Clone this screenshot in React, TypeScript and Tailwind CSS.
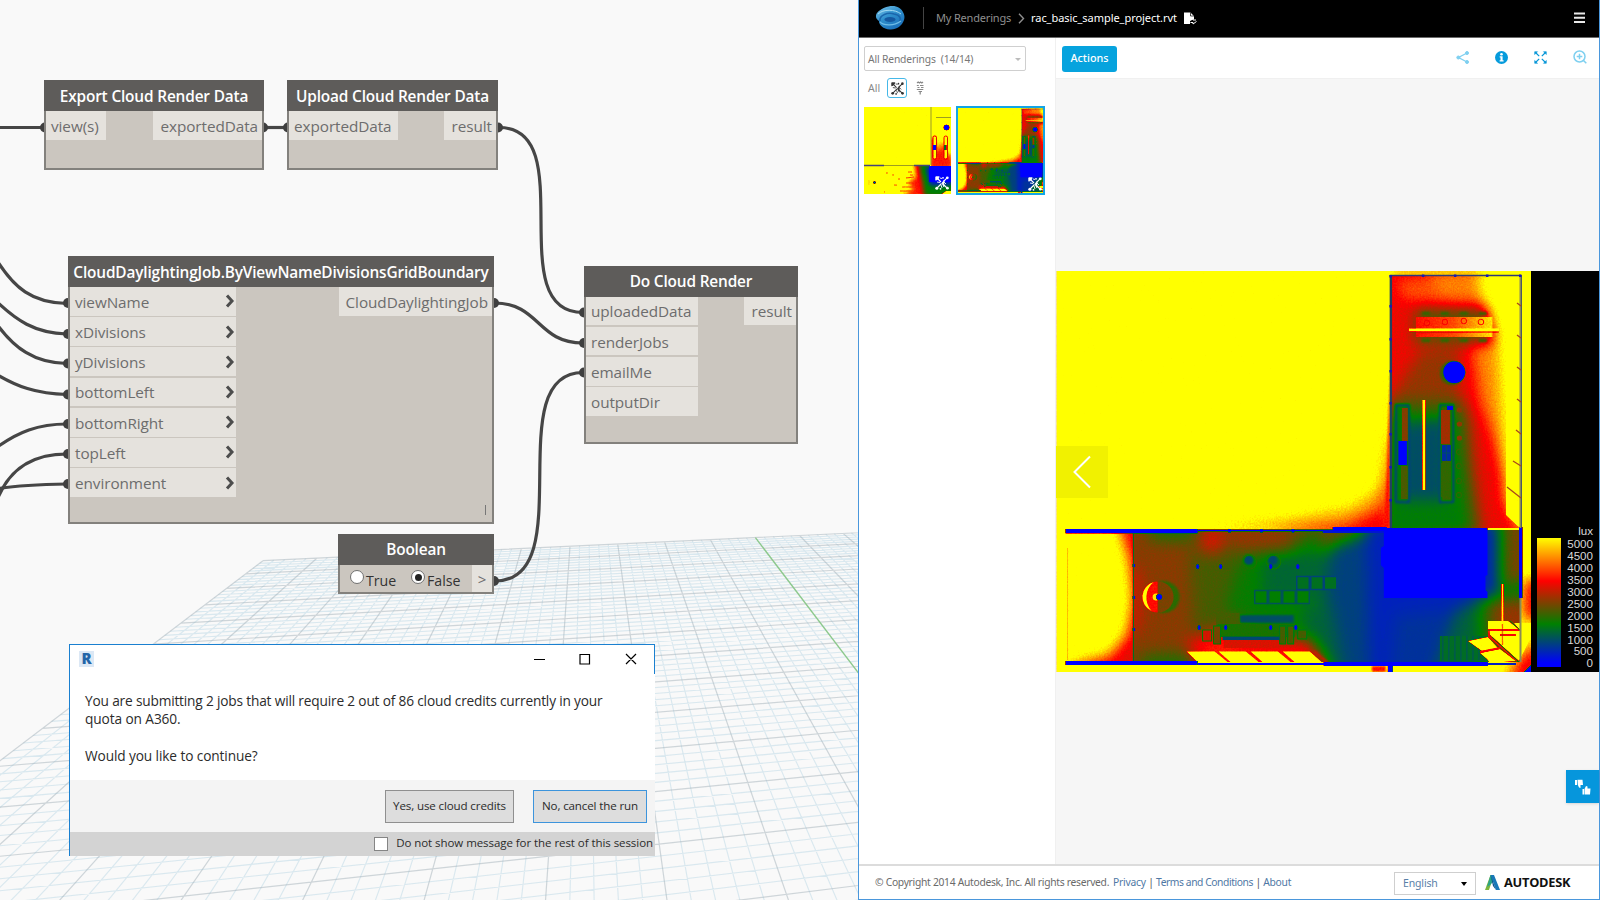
import React from "react";

/* ---------- ground grid ---------- */
const VB = [5490, 315];
const VA = [586, 315];
function project(u: number, v: number): [number, number, number] {
  const a = 0.0104 * u;
  const b = 0.0507 * v;
  const w = 1 + a - b;
  return [(263 + a * VB[0] - b * VA[0]) / w, (560.7 + a * VB[1] - b * VA[1]) / w, w];
}
function segment(p: [number, number], q: [number, number]) {
  const s = project(p[0], p[1]);
  const e = project(q[0], q[1]);
  return `M${s[0].toFixed(1)} ${s[1].toFixed(1)}L${e[0].toFixed(1)} ${e[1].toFixed(1)}`;
}
const VMAX = 17.6;
let minor = "";
let major = "";
for (let i = 0; i <= 100; i++) {
  const d = segment([i / 5, 0], [i / 5, VMAX]);
  if (i % 5) minor += d;
  else if (i !== 50) major += d;
}
for (let i = 0; i <= VMAX * 5; i++) {
  const d = segment([0, i / 5], [20, i / 5]);
  if (i % 5) minor += d;
  else major += d;
}
const axis = segment([10, 0], [10, VMAX]);

function Grid() {
  return (
    <svg className="absolute inset-0" width="858" height="900" fill="none">
      <path d={minor} stroke="#b9d8e6" strokeOpacity="0.5" strokeWidth="1.1" />
      <path d={major} stroke="#a3b2ba" strokeOpacity="0.5" strokeWidth="1.2" />
      <path d={axis} stroke="#8cc88c" strokeWidth="1.4" />
    </svg>
  );
}

/* ---------- node graph ---------- */
const wires = [
  "M-2 127.5H44",
  "M264 127.5H287",
  "M499 127.5C582 127.5 500 312.5 583 312.5",
  "M494 303C540 303 537 343 583 343",
  "M495 581C582 581 498 372.5 583 372.5",
  "M-4 259C14 288 32 303 67 303.5",
  "M-4 301C16 320 34 333 67 334",
  "M-4 323C14 348 34 363 67 363.5",
  "M-4 374C16 386 36 394 67 394.5",
  "M-4 448C18 432 38 424 67 424",
  "M-4 503C6 474 28 454 67 454",
  "M-4 489C18 485 40 484.5 67 484",
];
const ports = [
  [45, 127.5], [263, 127.5], [288, 127.5], [498, 127.5], [68, 303], [68, 334], [68, 363.5], [68, 394.5],
  [68, 424], [68, 454], [68, 484], [494, 303], [584, 312.5], [584, 343], [584, 372.5], [494, 581],
];

function Wires() {
  return (
    <svg className="absolute inset-0" width="858" height="900" fill="none">
      {wires.map((d) => (
        <path key={d} d={d} stroke="#464646" strokeWidth="3.2" />
      ))}
      {ports.map(([x, y]) => (
        <circle key={`${x}-${y}`} cx={x} cy={y} r="5" fill="#3f3f3f" />
      ))}
    </svg>
  );
}

function Chevron() {
  return (
    <svg width="10" height="14" viewBox="0 0 10 14" fill="none" stroke="#4d4d4d" strokeWidth="3">
      <path d="M2 1.5L7 7L2 12.5" />
    </svg>
  );
}

function Node({
  title, box, inputs, output, inputWidth, outputWidth, arrows, children,
}: {
  title: string; box: string; inputs?: string[]; output?: string; inputWidth?: string; outputWidth?: string;
  arrows?: boolean; children?: React.ReactNode;
}) {
  return (
    <section className={`absolute flex flex-col border-2 border-[#83817d] bg-[#cbc6bf] ${box}`}>
      <h2 className="-mx-0.5 -mt-0.5 flex h-[31px] shrink-0 items-center justify-center whitespace-nowrap bg-[#5e5c5a] pt-[2px] text-[15.4px] font-semibold tracking-[-0.16px] text-white">
        {title}
      </h2>
      {children ?? (
        <div className="flex items-start justify-between">
          <ul className={`flex flex-col gap-[1.4px] ${inputWidth}`}>
            {inputs?.map((name) => (
              <li key={name} className="flex h-[28.8px] items-center justify-between bg-[#e5e2dd] pl-[5px] pr-px text-[15.3px] tracking-[-0.07px] text-[#6d6d6d]">
                <span className="pt-[2px]">{name}</span>
                {arrows && <Chevron />}
              </li>
            ))}
          </ul>
          <div className={`flex h-[28.8px] items-center justify-end bg-[#e5e2dd] pr-[4px] pt-[2px] text-[15.3px] tracking-[-0.07px] text-[#6d6d6d] ${outputWidth}`}>
            {output}
          </div>
        </div>
      )}
    </section>
  );
}

function Radio({ on, label }: { on?: boolean; label: string }) {
  return (
    <label className="flex items-center gap-[2px] text-[14.2px] text-[#333]">
      <span className="-mt-[2px] flex size-[14px] items-center justify-center rounded-full border border-[#707070] bg-white">
        {on && <span className="size-[7px] rounded-full bg-[#222]" />}
      </span>
      <span className="pt-[4px]">{label}</span>
    </label>
  );
}

function Dialog() {
  return (
    <section className="absolute left-[69px] top-[644px] flex h-[212px] w-[586px] flex-col border-l border-t border-[#1a80d0] bg-white text-[#2b2b2b]">
      <header className="flex h-[29px] shrink-0 items-center justify-between border-r border-[#1a80d0] pl-[9px] pr-[17px]">
        <span className="-mt-[2px] flex h-[16px] w-[15px] items-center justify-center bg-[#dce8f5] text-[15px] font-extrabold leading-none text-[#2465a8]">R</span>
        <svg className="-mt-px" width="104" height="12" viewBox="0 0 104 12" fill="none" stroke="#000" strokeWidth="1.2">
          <path d="M1 6.500H12M47 1.500h9.500v9.500H47zM93 1L103 11M103 1L93 11" />
        </svg>
      </header>
      <div className="h-[106px] shrink-0 pl-[15px] pt-[18px] text-[13.7px] leading-[18.4px]">
        <p className="whitespace-nowrap tracking-[-0.175px]">You are submitting 2 jobs that will require 2 out of 86 cloud credits currently in your</p>
        <p className="tracking-[-0.1px]">quota on A360.</p>
        <p className="mt-[18px] tracking-[-0.11px]">Would you like to continue?</p>
      </div>
      <div className="flex h-[52px] shrink-0 items-center justify-end gap-[19px] bg-[#f4f4f4] pr-[8px] text-[11.6px] tracking-[-0.14px]">
        <button className="h-[33px] w-[129px] whitespace-nowrap border border-[#8f8f8f] bg-[#dddddd]">Yes, use cloud credits</button>
        <button className="h-[33px] w-[114px] whitespace-nowrap border border-[#3c94dc] bg-[#dddddd]">No, cancel the run</button>
      </div>
      <div className="flex flex-1 items-center justify-end gap-[8px] whitespace-nowrap bg-[#d3d3d3] pr-[2px] text-[11.5px] tracking-[-0.06px]">
        <span className="size-[14px] border border-[#858585] bg-white" />
        <span className="-mt-[2px]">Do not show message for the rest of this session</span>
      </div>
    </section>
  );
}

/* ---------- daylight rendering ---------- */
/* Illuminance is painted as gray (0 = 0 lux, 255 = 5000 lux) and mapped to false colour. */
const lux = (v: number) => `rgb(${v},${v},${v})`;

function FalseColour({ id }: { id: string }) {
  return (
    <filter id={id} x="0" y="0" width="100%" height="100%" colorInterpolationFilters="sRGB">
      <feTurbulence type="fractalNoise" baseFrequency="0.6" numOctaves="2" seed="4" result="n" />
      <feColorMatrix in="n" type="matrix" values="1 0 0 0 0 1 0 0 0 0 1 0 0 0 0 0 0 0 0 1" result="g" />
      <feComposite in="SourceGraphic" in2="g" operator="arithmetic" k1="0.12" k2="0.974" k3="0" k4="0" />
      <feComponentTransfer>
        <feFuncR type="table" tableValues="0 0 1 1" />
        <feFuncG type="table" tableValues="0 0.5 0 1" />
        <feFuncB type="table" tableValues="1 0 0 0" />
        <feFuncA type="linear" slope="0" intercept="1" />
      </feComponentTransfer>
    </filter>
  );
}

function Blur({ id, d }: { id: string; d: number }) {
  return (
    <filter id={id} x="-60%" y="-60%" width="220%" height="220%" colorInterpolationFilters="sRGB">
      <feGaussianBlur stdDeviation={d} />
    </filter>
  );
}

type Poly = [number, string];
const outside: Poly[] = [
  [215, "1392,360 1388,430 1380,488 1350,508 1290,519 1200,528 1392,534"],
  [160, "1392,430 1389,470 1382,508 1345,526 1270,533 1392,540"],
  [205, "1395,268 1480,268 1480,278 1395,278"],
  [150, "1524,580 1540,580 1540,620 1524,620"],
  [150, "1531,645 1540,645 1540,680 1505,680"],
];
const tower: Poly[] = [
  [158, "1380,260 1535,260 1535,540 1380,540"],
  [190, "1394,280 1470,272 1478,306 1404,300"],
  [206, "1430,270 1495,270 1490,300 1440,296"],
  [255, "1478,265 1545,265 1545,540 1519,528 1506,500 1502,420 1497,370 1494,330 1480,296"],
  [208, "1472,345 1497,338 1506,485 1494,440 1480,400"],
  [130, "1420,352 1456,348 1458,405 1390,405 1400,385"],
  [110, "1416,308 1488,308 1492,344 1414,344"],
  [108, "1390,398 1462,398 1470,420 1474,470 1482,535 1380,540"],
  [80, "1388,412 1458,412 1463,470 1470,535 1380,540"],
  [50, "1402,425 1446,420 1446,500 1400,500"],
];
const hall: Poly[] = [
  [126, "1120,520 1240,520 1240,680 1120,680"],
  [105, "1190,550 1290,525 1250,610 1195,640"],
  [90, "1150,520 1195,520 1198,541 1150,541"],
  [156, "1200,530 1225,530 1222,552 1204,554"],
  [132, "1230,530 1290,530 1288,548 1232,550"],
  [85, "1240,560 1290,550 1318,525 1335,600 1328,680 1290,660 1250,625 1225,610"],
  [66, "1262,556 1340,550 1342,620 1322,600 1262,600"],
  [42, "1332,545 1400,520 1400,680 1336,680 1326,600"],
  [64, "1300,610 1330,600 1345,680 1320,680"],
  [22, "1366,520 1500,520 1500,600 1440,680 1370,680"],
  [32, "1395,615 1450,610 1440,680 1390,680"],
  [62, "1455,610 1540,575 1540,690 1430,690"],
  [92, "1478,600 1540,590 1540,690 1478,690"],
  [130, "1490,600 1540,600 1540,645 1495,645"],
  [172, "1190,640 1230,626 1240,642 1310,640 1330,672 1180,672"],
  [150, "1125,560 1142,575 1142,625 1127,640"],
  [90, "1140,655 1195,652 1195,675 1140,675"],
];
const sunPatches = [
  "1187,651.5 1215,651.5 1229,663 1199,663",
  "1219,651.5 1246,651.5 1260,663 1232,663",
  "1251,651.5 1278,651.5 1292,663 1264,663",
  "1283,651.5 1310,651.5 1323,663 1296,663",
  "1488,621 1508,621 1519,629 1514,623 1531,623 1531,637 1519,661 1492,637 1488,632",
  "1468,641 1488,637 1498,648 1482,651",
  "1480,653 1500,649 1516,661 1490,663 1487,659",
];

function RenderImage({ id, viewBox, className }: { id: string; viewBox: string; className: string }) {
  const url = (s: string) => `url(#${id}-${s})`;
  return (
    <svg className={className} viewBox={viewBox} preserveAspectRatio="none">
      <defs>
        <FalseColour id={`${id}-lut`} />
        <Blur id={`${id}-soft`} d={7} />
        <Blur id={`${id}-hall`} d={8} />
        <Blur id={`${id}-fine`} d={1.2} />
        <clipPath id={`${id}-img`}><rect x="1057" y="271" width="474" height="401" /></clipPath>
        <clipPath id={`${id}-tower`}><rect x="1391" y="276" width="129" height="252" /></clipPath>
        <clipPath id={`${id}-room`}><rect x="1134" y="530" width="386" height="132" /></clipPath>
        <clipPath id={`${id}-left`}><rect x="1066" y="530" width="68" height="132" /></clipPath>
        <linearGradient id={`${id}-table`}>
          <stop offset="0" stopColor={lux(168)} />
          <stop offset="0.5" stopColor={lux(188)} />
          <stop offset="1" stopColor={lux(240)} />
        </linearGradient>
      </defs>
      <g clipPath={url("img")}>
        <g filter={url("lut")}>
          <rect x="1057" y="271" width="474" height="401" fill={lux(255)} />
          <g filter={url("soft")}>
            {outside.map(([v, p]) => <polygon key={p} points={p} fill={lux(v)} />)}
          </g>
          <polygon points="1390,370 1390,528 1384,528 1387,470" fill={lux(168)} filter={url("fine")} />
          <g clipPath={url("tower")}>
            <g filter={url("soft")}>
              {tower.map(([v, p]) => <polygon key={p} points={p} fill={lux(v)} />)}
            </g>
            <polygon points="1506,276 1520,276 1520,528 1506,515" fill={lux(255)} />
            <path d="M1422 313.500h66M1422 340.500h66" stroke={lux(96)} strokeWidth="3" strokeDasharray="8 11" filter={url("fine")} />
            <rect x="1416" y="317" width="76.500" height="20" fill={url("table")} />
            <g fill="none" stroke={lux(158)} strokeWidth="0.900">
              <circle cx="1427" cy="323" r="2.800" /><circle cx="1445" cy="322" r="2.800" />
              <circle cx="1464" cy="321" r="2.800" /><circle cx="1481" cy="322" r="2.800" />
            </g>
            <rect x="1409" y="328.500" width="90" height="3" fill={lux(255)} />
            <path d="M1409 332h90" stroke={lux(120)} strokeWidth="0.800" />
            <circle cx="1452" cy="373" r="12" fill={lux(100)} filter={url("fine")} />
            <circle cx="1454.300" cy="372.300" r="11" fill={lux(0)} />
            <g filter={url("fine")} fill="none" stroke={lux(36)} strokeWidth="1.800">
              <rect x="1396" y="405" width="13" height="97" fill={lux(80)} />
              <rect x="1440" y="405" width="13" height="97" fill={lux(100)} />
            </g>
            <rect x="1402" y="408" width="6" height="33" fill={lux(125)} />
            <rect x="1401" y="466" width="7" height="33" fill={lux(106)} />
            <rect x="1441" y="410" width="9" height="34" fill={lux(134)} />
            <rect x="1441" y="463" width="9" height="34" fill={lux(98)} />
            <rect x="1398.500" y="441" width="8.500" height="24" fill={lux(0)} />
            <rect x="1442" y="445" width="9" height="16" fill={lux(30)} />
            <path d="M1442 453h9M1446.500 445v16" stroke={lux(50)} />
            <rect x="1447" y="406" width="6" height="4" fill={lux(5)} />
            <g fill={lux(128)}>
              <circle cx="1459.500" cy="410" r="2.600" /><circle cx="1459.500" cy="424" r="2.600" /><circle cx="1459.500" cy="438" r="2.600" />
            </g>
            <g fill="none" stroke={lux(100)} strokeWidth="1">
              <circle cx="1459" cy="452" r="2.500" /><circle cx="1459" cy="466" r="2.500" /><circle cx="1459" cy="481" r="2.500" /><circle cx="1459" cy="495" r="2.500" />
            </g>
            <rect x="1422.500" y="400" width="3" height="90" fill={lux(255)} />
          </g>

          <g clipPath={url("left")}>
            <rect x="1066" y="530" width="68" height="132" fill={lux(255)} />
            <g filter={url("soft")}>
              <polygon points="1118,518 1150,520 1150,680 1055,680 1078,664 1110,656 1128,634 1134,600 1130,560" fill={lux(155)} />
            </g>
            <rect x="1067.500" y="548" width="1.200" height="112" fill={lux(225)} />
          </g>

          <g clipPath={url("room")}>
            <rect x="1134" y="530" width="386" height="132" fill={lux(120)} />
            <g filter={url("hall")}>
              {hall.map(([v, p]) => <polygon key={p} points={p} fill={lux(v)} />)}
            </g>
            <circle cx="1164" cy="597" r="16" fill={lux(96)} filter={url("fine")} />
            <circle cx="1158.500" cy="597" r="15.500" fill={lux(122)} />
            <path d="M1158 581.500A15.500 15.500 0 0 0 1158 612.500z" fill={lux(168)} />
            <path d="M1154 582A15.500 15.500 0 0 0 1152 611A20 20 0 0 1 1154 582z" fill={lux(255)} />
            <circle cx="1156.500" cy="597" r="3.500" fill={lux(240)} />
            <circle cx="1159.500" cy="597" r="3" fill={lux(0)} />
            <g filter={url("fine")} fill={lux(46)}>
              <circle cx="1249" cy="560" r="5" /><circle cx="1273" cy="560" r="5" />
            </g>
            <g fill="none" stroke={lux(92)}>
              <circle cx="1250" cy="562" r="7" /><circle cx="1274" cy="562" r="7" />
            </g>
            <g fill={lux(82)} stroke={lux(54)} strokeWidth="1.500">
              {[1255, 1269, 1283, 1297].map((x) => <rect key={x} x={x} y="590.500" width="12.500" height="13" />)}
              {[1297, 1311, 1324.500].map((x) => <rect key={x} x={x} y="576.500" width="12.500" height="13" fill={lux(72)} stroke={lux(44)} />)}
            </g>
            <rect x="1240" y="615" width="54" height="8" fill={lux(50)} filter={url("fine")} />
            <rect x="1216.500" y="613" width="23.500" height="14" fill={lux(104)} />
            <rect x="1218" y="624" width="77" height="13" fill={lux(90)} />
            <rect x="1223" y="636.500" width="58" height="3.500" fill={lux(46)} />
            <rect x="1224" y="640" width="56" height="8" fill={lux(152)} />
            <g stroke={lux(66)} strokeWidth="0.800">
              <rect x="1203" y="630" width="9" height="11" fill={lux(150)} />
              <rect x="1214" y="626" width="7" height="18" fill={lux(120)} />
              <rect x="1280" y="626" width="6" height="18" fill={lux(105)} />
              <rect x="1288" y="626" width="6" height="18" fill={lux(108)} />
              <rect x="1298" y="630" width="9" height="9" fill={lux(105)} />
            </g>
            <g fill={lux(5)}>
              {[1198, 1221, 1271, 1298].map((x) => <ellipse key={x} cx={x} cy="566.500" rx="1.600" ry="2.500" />)}
              {[1199.500, 1226, 1271, 1296].map((x) => <ellipse key={x} cx={x} cy="627.500" rx="1.600" ry="2.500" />)}
            </g>
            <rect x="1440" y="636" width="48" height="25" fill={lux(70)} />
            <path d="M1443 636v25M1449 636v25M1455 636v25M1461 636v25M1467 636v25M1473 636v25M1479 636v25" stroke={lux(52)} />
          </g>
          <polygon points="1312,651 1326,663 1330,663 1316,651" fill={lux(150)} filter={url("fine")} />
          {sunPatches.map((p) => <polygon key={p} points={p} fill={lux(255)} />)}
          <path d="M1480 652L1500 648M1490 637L1517 661M1489 630V638" stroke={lux(165)} strokeWidth="1.800" />
          <rect x="1501.500" y="584" width="2" height="40" fill={lux(245)} />
          <path d="M1502.500 624V645" stroke={lux(195)} strokeWidth="1.500" />
          <path d="M1488 630H1520M1500 635H1516M1492 637L1519 662M1510 621L1520 630" stroke={lux(75)} />
          <g filter={url("fine")}>
            <rect x="1372" y="666" width="14" height="6" fill={lux(170)} />
          </g>

          <g fill={lux(0)}>
            <rect x="1066" y="529" width="132" height="4.300" />
            <rect x="1198" y="529.500" width="135" height="1.800" />
            <rect x="1228.500" y="529" width="2.500" height="3.500" />
            <rect x="1260.500" y="529" width="2.500" height="3.500" />
            <rect x="1292" y="529" width="2.500" height="3.500" />
            <rect x="1323" y="530" width="62" height="3" fill={lux(14)} />
            <rect x="1333" y="527" width="54" height="4" />
            <polygon points="1384,528 1487.500,528 1487.500,575 1485.500,576 1485.500,590 1487.500,592 1487.500,598 1384,598 1384,568 1381,565 1381,548 1384,546" />
            <rect x="1519" y="527" width="3.500" height="71" />
            <rect x="1066" y="661" width="132" height="4" />
            <rect x="1198" y="663" width="130" height="2" />
            <rect x="1324" y="662" width="164" height="4" />
            <rect x="1488" y="663" width="28" height="2" fill={lux(20)} />
            <rect x="1388" y="665" width="5" height="7" />
            <rect x="1133" y="564" width="2.500" height="3" /><rect x="1133" y="596" width="2.500" height="3" /><rect x="1133" y="628" width="2.500" height="3" />
            <polygon points="1531,665 1531,672 1524,672" />
          </g>
          <path d="M1133.800 533V661" stroke={lux(60)} />
        </g>
        <g stroke="#2c3a78" fill="none">
          <path d="M1390 275.500H1521" strokeWidth="1.600" />
          <path d="M1391 275V528" strokeWidth="2.400" stroke="#24405f" />
          <path d="M1520.500 275V528M1520.500 598V662" strokeWidth="2" stroke="#8a8a55" />
          <path d="M1521.500 275V528" strokeWidth="0.800" />
        </g>
        <g fill="#1818b8">
          {[275, 305, 338, 370, 402, 433, 466, 499].map((y) => <rect key={y} x="1389.500" y={y} width="2.500" height="2.500" />)}
          {[1422, 1454, 1486, 1519].map((x) => <rect key={x} x={x} y="274.500" width="2.500" height="2.500" />)}
        </g>
        <path d="M1517 303l4 3M1517 335l4 3M1517 367l4 3M1517 399l4 3M1516 430l5 4M1513 461l8 5M1507 487l14 11" stroke="#a8481c" strokeWidth="1.300" />
      </g>
    </svg>
  );
}

function SecondaryThumb() {
  return (
    <svg className="size-[87px]" viewBox="0 0 87 87">
      <defs>
        <FalseColour id="t-lut" />
        <Blur id="t-b" d={2} />
        <clipPath id="t-lo"><rect x="0" y="59" width="87" height="28" /></clipPath>
        <clipPath id="t-up"><rect x="67" y="0" width="20" height="59" /></clipPath>
      </defs>
      <g filter="url(#t-lut)">
        <rect width="87" height="87" fill={lux(255)} />
        <g clipPath="url(#t-up)">
          <g filter="url(#t-b)">
            <path d="M66 30L70 30L74 45L78 34L82 45L88 50V62H66z" fill={lux(172)} />
          </g>
          <g fill={lux(248)} stroke={lux(130)} strokeWidth="0.800">
            <rect x="69" y="29" width="3.500" height="23" rx="1.500" />
            <rect x="80" y="29" width="3.500" height="23" rx="1.500" />
          </g>
          <rect x="69" y="38" width="3" height="5" fill={lux(0)} />
          <rect x="80" y="38" width="2.500" height="5" fill={lux(75)} />
        </g>
        <circle cx="82.500" cy="20.500" r="2.800" fill={lux(0)} />
        <g clipPath="url(#t-lo)">
          <g filter="url(#t-b)">
            <path d="M50 55H90V90H36L50 82L44 76L52 70z" fill={lux(170)} />
            <path d="M54 55H90V90H60L58 75z" fill={lux(85)} />
            <path d="M62 60H90V78H66z" fill={lux(12)} />
            <path d="M66 78H82V90H64z" fill={lux(80)} />
          </g>
          <path d="M65 59H87V75H65z" fill={lux(0)} />
          <path d="M38 80h12M42 76h8M36 84h16M28 68h2M44 65h4M22 66h2M20 85h1M34 72h2M42 71l8-1M30 78h3M46 68h3" stroke={lux(180)} strokeWidth="1" />
          <path d="M5 73v5" stroke={lux(200)} strokeWidth="0.600" />
          <circle cx="10.500" cy="75.500" r="1.200" fill={lux(0)} />
          <path d="M78 87l4-3h5v3z" fill={lux(255)} />
        </g>
      </g>
      <path d="M0 58.500H20M50 58.500H66" stroke="#44447a" strokeWidth="1.500" />
      <path d="M20 58.500H50M72 10.500H87" stroke="#84842a" strokeWidth="0.800" />
      <path d="M67 0V58" stroke="#90902e" strokeWidth="0.900" />
    </svg>
  );
}

/* ---------- icons ---------- */
function SplatIcon({ color, className }: { color: string; className: string }) {
  return (
    <svg className={className} viewBox="0 0 14 14" fill={color} stroke={color}>
      <path d="M1.500 1.500L6 6M8.500 8.500L12 12M12.300 1.700L8.500 5.500M6.500 7.500L2 12" strokeWidth="1.100" fill="none" />
      <path d="M.8 .8h3.400L3 3 .8 4.200zM5 2l2 .5M2 6l3 .5M9 6l2 2M6 9l1 3M9.500 4L7 7l2 4" strokeWidth="0.900" />
      <circle cx="12.300" cy="1.800" r="1.400" stroke="none" /><circle cx="1.800" cy="12.200" r="1.500" stroke="none" /><circle cx="12.400" cy="12.200" r="1.400" stroke="none" /><circle cx="5.500" cy="12.800" r="0.900" stroke="none" /><circle cx="8" cy="1.800" r="0.900" stroke="none" />
    </svg>
  );
}

function Logo() {
  return (
    <svg className="h-[26px] w-[31px]" viewBox="0 0 31 26">
      <defs>
        <linearGradient id="lg" x1="0" y1="0" x2="0.700" y2="1">
          <stop offset="0" stopColor="#7cc6ea" /><stop offset="0.5" stopColor="#2f8fcc" /><stop offset="1" stopColor="#1a6fba" />
        </linearGradient>
      </defs>
      <path d="M2 8C7 2 16 0 21 1.500C27 3 31 10 29 15C27 21 21 25 15 24.500C8 24 4 20 4 16C1 14 0 11 2 8z" fill="url(#lg)" />
      <path d="M3 9C8 4 20 4 26 9" stroke="#a5dcf2" strokeWidth="1" fill="none" />
      <path d="M5 16C4 10 13 7 19 9C25 10 27 14 24 17" stroke="#1a66ac" strokeWidth="1.500" fill="none" />
      <ellipse cx="15" cy="14.500" rx="5.500" ry="2.600" fill="#1458a0" />
      <path d="M5 17C9 21 19 21 26 16" stroke="#6fbde6" strokeWidth="1.100" fill="none" />
    </svg>
  );
}

const scale = ["5000", "4500", "4000", "3500", "3000", "2500", "2000", "1500", "1000", "500", "0"];

function Legend() {
  return (
    <div className="flex h-full w-[68px] flex-col bg-black pl-[6px] pr-[6px] font-['Liberation_Sans',Arial,sans-serif] text-[11.600px] text-[#d8d8d8]">
      <div className="mt-[254px] text-right leading-[12px]">lux</div>
      <div className="mt-px flex">
        <div className="h-[129px] w-[24px] bg-[linear-gradient(to_bottom,#ffff00,#ff0000_33.300%,#008000_66.600%,#0000ff_97%)]" />
        <div className="flex flex-1 flex-col">
          {scale.map((s) => (
            <div key={s} className="h-[11.950px] text-right leading-[11px]">{s}</div>
          ))}
        </div>
      </div>
    </div>
  );
}

function Cloud() {
  return (
    <main className="flex h-[900px] w-[742px] flex-col border-b border-l border-r border-[#4a97dc] bg-white font-['Noto_Sans','Open_Sans',sans-serif]">
      <header className="flex h-[38px] shrink-0 items-center border-b border-[#6a6a6a] bg-black pb-px pl-[16px] pr-[14px] text-[11px]">
        <Logo />
        <span className="ml-[17px] h-[22px] w-px bg-[#444]" />
        <span className="ml-[12px] w-[74px] whitespace-nowrap tracking-[-0.180px] text-[#8f8f8f]">My Renderings</span>
        <svg className="ml-[8px]" width="7" height="11" viewBox="0 0 7 11" fill="none" stroke="#8f8f8f" strokeWidth="1.400"><path d="M1 .8L5.500 5.500L1 10.200" /></svg>
        <span className="ml-[6px] w-[147px] whitespace-nowrap tracking-[-0.050px] text-white">rac_basic_sample_project.rvt</span>
        <svg className="ml-[6px]" width="13" height="13" viewBox="0 0 13 13">
          <path d="M0 .5h6.500L10 4v3L6 9v3H0z" fill="#fff" /><path d="M6.500 .5V4H10" stroke="#000" strokeWidth=".7" fill="none" />
          <path d="M6 8l3-1.500V8h3M12.500 9.500L9 12V10.500H6.500" stroke="#fff" strokeWidth="1" fill="none" />
        </svg>
        <svg className="ml-auto" width="11" height="12" viewBox="0 0 11 12" stroke="#e8e8e8" strokeWidth="2"><path d="M0 1.500H11M0 5.800H11M0 10H11" /></svg>
      </header>

      <div className="flex min-h-0 flex-1">
        <aside className="w-[197px] shrink-0 border-r border-[#f0f0f0] pl-[5px] pt-[8px] text-[11px] text-[#777]">
          <div className="flex h-[25px] w-[162px] items-center justify-between rounded-[2px] border border-[#cfcfcf] pl-[3px] pr-[4px] pt-[2px]">
            <span className="whitespace-pre text-[10.300px] tracking-[-0.150px]">All Renderings  (14/14)</span>
            <span className="size-0 border-x-[3px] border-t-[3.500px] border-x-transparent border-t-[#bbb]" />
          </div>
          <div className="mt-[7px] flex h-[20px] items-center pl-[4px]">
            <span className="w-[19px] pt-px text-[10.500px] text-[#888]">All</span>
            <span className="flex size-[20px] items-center justify-center rounded-[3px] border border-[#45b8e8]"><SplatIcon color="#333" className="size-[13px]" /></span>
            <svg className="ml-[9px]" width="9" height="14" viewBox="0 0 9 14" stroke="#888" fill="none" strokeWidth="1.200">
              <path d="M1 2l1.200-1 1.200 1 1.200-1 1.200 1 1.200-1M.8 4.500h2M4 4.500h3.500M1.500 6.500h2M5 6.500h2.500M.8 8.500h6.500M2.500 10.500h3.500M4.200 10v3.500" />
            </svg>
          </div>
          <div className="mt-[8px] flex">
            <div className="relative mt-px h-[87px] w-[88px]">
              <SecondaryThumb />
              <SplatIcon color="#fff" className="absolute left-[71px] top-[69px] size-[14px]" />
            </div>
            <div className="relative ml-[4px] size-[89px] border-2 border-[#12a5e6]">
              <RenderImage id="thumb" viewBox="1090 271 401 401" className="size-[85px]" />
              <SplatIcon color="#fff" className="absolute left-[70px] top-[69px] size-[14px]" />
            </div>
          </div>
        </aside>

        <section className="flex min-w-0 flex-1 flex-col bg-[#f6f6f6]">
          <div className="flex h-[41px] shrink-0 items-center border-b border-[#f0f0f0] bg-white pl-[6px] pr-[12px]">
            <button className="mt-px h-[26px] w-[55px] rounded-[3px] bg-[#06a3de] text-[10.800px] font-medium text-white">Actions</button>
            <div className="-mt-[2px] ml-auto flex items-center gap-[26px]">
              <svg width="13" height="13" viewBox="0 0 13 13" fill="#7fd0f0" stroke="#7fd0f0"><path d="M11 2L2.500 6.500L11 11" fill="none" strokeWidth="1.300" /><circle cx="11" cy="2" r="1.500" /><circle cx="2.300" cy="6.500" r="1.500" /><circle cx="11" cy="11" r="1.500" /></svg>
              <svg width="13" height="13" viewBox="0 0 13 13"><circle cx="6.500" cy="6.500" r="6.500" fill="#069bdc" /><circle cx="6.500" cy="3.200" r="1.300" fill="#fff" /><path d="M4.700 5.300H7.600V9.300H8.600V10.500H4.600V9.300H5.500V6.500H4.700z" fill="#fff" /></svg>
              <svg width="13" height="13" viewBox="0 0 13 13" fill="#0696d7" stroke="#0696d7"><path d="M2 2L5.200 5.200M11 2L7.800 5.200M2 11L5.200 7.800M11 11L7.800 7.800" strokeWidth="1.200" /><path d="M.7 .7H3.500L.7 3.500zM12.300 .7H9.500L12.300 3.500zM.7 12.300H3.500L.7 9.500zM12.300 12.300H9.500L12.300 9.500z" strokeWidth=".6" /></svg>
              <svg width="14" height="14" viewBox="0 0 14 14" fill="none" stroke="#7fd0f0" strokeWidth="1.500"><circle cx="6.500" cy="6.500" r="5.500" /><path d="M10.500 10.500L13.300 13.300M6.500 3.700V9.300M3.700 6.500H9.300" /></svg>
            </div>
          </div>
          <div className="flex min-h-0 flex-1 flex-col pt-[192px]">
            <div className="relative flex h-[401px]">
              <RenderImage id="main" viewBox="1056.5 271 474.5 401" className="h-[401px] w-[475px]" />
              <Legend />
              <button className="absolute left-0 top-[175px] flex h-[52px] w-[52px] items-center justify-center bg-[#f1f100]">
                <svg width="18" height="34" viewBox="0 0 18 34" fill="none" stroke="#fff" strokeWidth="2"><path d="M17 1.500L1.500 17L17 32.500" /></svg>
              </button>
            </div>
            <button className="ml-auto mt-[98px] flex h-[33px] w-[33px] items-center justify-center bg-[#0696dc] shadow">
              <svg width="16" height="16" viewBox="0 0 16 16" fill="#fff">
                <path d="M0 1H2V6H0zM2.500 .8H7.500L8 6H5.500V9L4 8.500L2.800 5.800z" />
                <path d="M7.500 10H9V15.500H7.500zM9.500 10L11 7L12.500 7.500V9.500H15.500L15 15.500H9.500z" />
              </svg>
            </button>
          </div>
        </section>
      </div>

      <footer className="flex h-[35px] shrink-0 items-center border-t-2 border-[#dcdcdc] pl-[16px] text-[10.300px] text-[#6a6a6a]">
        <span className="w-[238px] whitespace-nowrap pt-px tracking-[-0.290px]">© Copyright 2014 Autodesk, Inc. All rights reserved.</span>
        <nav className="flex gap-[2.500px] whitespace-nowrap pt-px tracking-[-0.430px] text-[#4f78a5]">
          <a className="tracking-[-0.220px]">Privacy</a><span className="text-[#555]">|</span><a>Terms and Conditions</a><span className="text-[#555]">|</span><a className="tracking-[-0.250px]">About</a>
        </nav>
        <div className="ml-auto mr-[9px] mt-[2px] flex h-[23px] w-[82px] items-center justify-between border border-[#cfcfcf] pl-[8px] pr-[8px] pt-px text-[10.500px] tracking-[-0.150px] text-[#5a7fa8]">
          English
          <span className="size-0 border-x-[3.500px] border-t-[4px] border-x-transparent border-t-black" />
        </div>
        <svg width="15" height="15" viewBox="0 0 15 15">
          <path d="M5.500 0H9L4 15H0z" fill="#7fb53c" /><path d="M5.500 0L9 6L5 10L2 12z" fill="#2aa38a" /><path d="M5.500 0H9L15 15H11z" fill="#1878b8" /><path d="M5.500 0L11 15L8 11z" fill="#0c4f8c" />
        </svg>
        <span className="ml-[4px] mr-[27px] w-[68px] whitespace-nowrap pt-px font-['Open_Sans',sans-serif] text-[12.800px] font-bold tracking-[-0.250px] text-[#111]">AUTODESK</span>
      </footer>
    </main>
  );
}

export default function App() {
  return (
    <div className="flex h-[900px] w-[1600px] overflow-hidden bg-[#f9f9f9]">
      <div className="relative h-[900px] w-[858px] shrink-0 overflow-hidden font-['Open_Sans','Noto_Sans',sans-serif]">
        <Grid />
        <Wires />
        <Node title="Export Cloud Render Data" box="left-[44px] top-[80px] h-[89.500px] w-[220px]" inputs={["view(s)"]} output="exportedData" inputWidth="w-[60px]" outputWidth="w-[109px]" />
        <Node title="Upload Cloud Render Data" box="left-[287px] top-[80px] h-[89.500px] w-[211px]" inputs={["exportedData"]} output="result" inputWidth="w-[109px]" outputWidth="w-[52px]" />
        <Node
          title="CloudDaylightingJob.ByViewNameDivisionsGridBoundary"
          box="left-[68px] top-[256px] h-[268px] w-[426px]"
          inputs={["viewName", "xDivisions", "yDivisions", "bottomLeft", "bottomRight", "topLeft", "environment"]}
          output="CloudDaylightingJob" inputWidth="w-[166px]" outputWidth="w-[153px]" arrows
        />
        <span className="absolute left-[485px] top-[505px] h-[10px] w-px bg-[#777]" />
        <Node title="Do Cloud Render" box="left-[584px] top-[265.500px] h-[178px] w-[214px]" inputs={["uploadedData", "renderJobs", "emailMe", "outputDir"]} output="result" inputWidth="w-[112px]" outputWidth="w-[52px]" />
        <Node title="Boolean" box="left-[338px] top-[533.500px] h-[60.500px] w-[156px]">
          <div className="flex flex-1 items-center pl-[10px]">
            <div className="w-[61px]"><Radio label="True" /></div>
            <Radio on label="False" />
            <span className="ml-auto flex h-full w-[20px] items-center justify-center bg-[#e5e2dd] pt-[2px] text-[15px] text-[#6d6d6d]">&gt;</span>
          </div>
        </Node>
        <Dialog />
      </div>
      <Cloud />
    </div>
  );
}
